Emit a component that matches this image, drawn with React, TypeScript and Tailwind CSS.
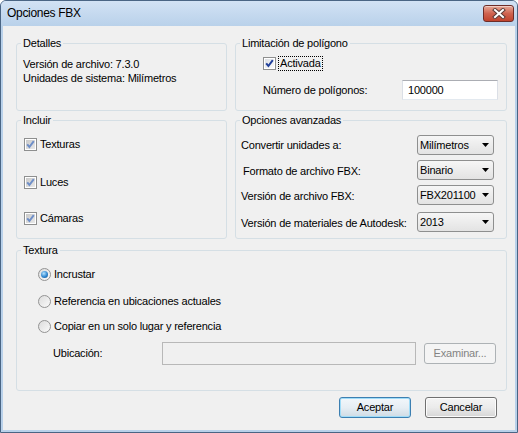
import type { ReactNode } from 'react';

// casilla estilo Windows 7
function Check({ dim = false }: { dim?: boolean }) {
    return (
        <span className="relative flex h-[13px] w-[13px] shrink-0 items-center justify-center border border-[#8e8f8f] bg-white">
            <span className={dim ? "h-[9px] w-[9px] bg-gradient-to-br from-[#c9c9c9] to-[#e9e9e9]" : "h-[9px] w-[9px] bg-gradient-to-br from-[#dcdfe4] to-[#fbfbfb]"} />
            <svg className="absolute left-0 top-0" width="11" height="11" viewBox="0 0 11 11">
                <path d="M2.2 5.4 L4.4 8 L8.8 2.2" fill="none" stroke={dim ? "#6f8fc8" : "#21409a"} strokeWidth="2" />
            </svg>
        </span>
    );
}

function Radio({ on = false }: { on?: boolean }) {
    return (
        <span className="flex h-[13px] w-[13px] shrink-0 items-center justify-center rounded-full border border-[#939393] bg-gradient-to-br from-[#dcdcdc] to-[#fafafa]">
            {on && (
                <span className="h-[7px] w-[7px] rounded-full bg-[radial-gradient(circle_at_40%_35%,#b6e4ff,#2f86d0_55%,#154f86)]" />
            )}
        </span>
    );
}

function Group({ title, className, children }: { title: string; className: string; children: ReactNode }) {
    return (
        <div className={`flex flex-col rounded-[3px] border border-[#d5dfe5] ${className}`}>
            <span className="-mt-[7px] ml-[4px] w-fit bg-[#f0f0f0] px-[2px] leading-[13px]">{title}</span>
            {children}
        </div>
    );
}

function Combo({ value }: { value: string }) {
    return (
        <div className="flex h-[20px] w-[77px] items-center justify-between rounded-[3px] border border-[#8e8f8f] bg-gradient-to-b from-[#f6f6f6] to-[#e3e3e3] pl-[2px] pr-[4px]">
            <span className="leading-[13px]">{value}</span>
            <svg width="7" height="4" viewBox="0 0 7 4">
                <path d="M0 0 H7 L3.5 4 Z" fill="#000" />
            </svg>
        </div>
    );
}

function Button({ label, main = false, off = false }: { label: string; main?: boolean; off?: boolean }) {
    let cls = "flex h-[21px] w-[72px] items-center justify-center rounded-[3px] border border-[#707070] bg-gradient-to-b from-[#f4f4f4] via-[#ebebeb] to-[#d6d6d6] shadow-[inset_0_0_0_1px_#fcfcfc]";
    if (main) cls = "flex h-[21px] w-[72px] items-center justify-center rounded-[3px] border border-[#3c7fb1] bg-gradient-to-b from-[#f2f7fb] via-[#e6eef4] to-[#cfdbe4] shadow-[inset_0_0_0_1px_#9fdcf8]";
    if (off) cls = "flex h-[21px] w-[72px] items-center justify-center rounded-[3px] border border-[#adb2b5] bg-[#f4f4f4] text-[#838383]";
    return <div className={cls}>{label}</div>;
}

export default function App() {
    return (
        <div className="flex h-[433px] w-[518px] flex-col rounded-t-[6px] border border-[#4a6584] bg-[#b9d1ea] font-['Liberation_Sans',Arial,sans-serif] text-[11px] tracking-[-0.2px] text-black">
            {/* barra de título */}
            <div className="flex h-[25px] shrink-0 items-start justify-between rounded-t-[5px] bg-gradient-to-b from-[#d2e2f4] to-[#b9d1ea] pl-[6px] pr-[3px]">
                <span className="mt-[5px] text-[12px] leading-[15px] tracking-[-0.3px]">Opciones FBX</span>
                <div className="mt-[4px] flex h-[17px] w-[31px] items-center justify-center rounded-[3px] border border-[#6d2c28] bg-gradient-to-b from-[#e6a898] via-[#cf6350] to-[#c0422c] shadow-[inset_0_1px_0_rgba(255,255,255,0.45)]">
                    <svg width="14" height="11" viewBox="0 0 14 11">
                        <path d="M3 2 L11 9 M11 2 L3 9" stroke="#5b3b37" strokeWidth="4" strokeLinecap="square" />
                        <path d="M3 2 L11 9 M11 2 L3 9" stroke="#ffffff" strokeWidth="2" strokeLinecap="square" />
                    </svg>
                </div>
            </div>

            {/* área de cliente */}
            <div className="mx-[2px] mb-[2px] flex flex-1 flex-col bg-[#f0f0f0] pl-[13px] pr-[8px] pt-[17px]">
                <div className="flex h-[68px] gap-[8px]">
                    <Group title="Detalles" className="w-[211px]">
                        <div className="mt-[7px] pl-[6px] leading-[14px]">
                            <p>Versión de archivo: 7.3.0</p>
                            <p>Unidades de sistema: Milímetros</p>
                        </div>
                    </Group>
                    <Group title="Limitación de polígono" className="w-[272px]">
                        <div className="mt-[6px] flex items-center pl-[27px]">
                            <Check />
                            <span className="ml-[2px] border border-dotted border-black px-[1px] leading-[13px]">Activada</span>
                        </div>
                        <div className="mt-[9px] flex h-[20px] items-center justify-between pl-[27px] pr-[8px]">
                            <span>Número de polígonos:</span>
                            <div className="flex h-[20px] w-[96px] items-center border border-[#abadb3] border-b-[#e3e9ef] border-x-[#dbdfe6] bg-white pl-[5px]">100000</div>
                        </div>
                    </Group>
                </div>

                <div className="mt-[9px] flex h-[119px] gap-[8px]">
                    <Group title="Incluir" className="w-[211px]">
                        <div className="flex flex-col pl-[7px]">
                            <label className="mt-[11px] flex h-[13px] items-center gap-[3px]"><Check dim />Texturas</label>
                            <label className="mt-[25px] flex h-[13px] items-center gap-[3px]"><Check dim />Luces</label>
                            <label className="mt-[23px] flex h-[13px] items-center gap-[3px]"><Check dim />Cámaras</label>
                        </div>
                    </Group>
                    <Group title="Opciones avanzadas" className="w-[272px]">
                        <div className="flex flex-col pl-[5px] pr-[12px]">
                            <div className="mt-[8px] flex h-[20px] items-center justify-between">
                                <span>Convertir unidades a:</span>
                                <Combo value="Milímetros" />
                            </div>
                            <div className="mt-[5px] flex h-[20px] items-center justify-between">
                                <span className="ml-[2px] mt-[2px]">Formato de archivo FBX:</span>
                                <Combo value="Binario" />
                            </div>
                            <div className="mt-[5px] flex h-[20px] items-center justify-between">
                                <span className="mt-[2px]">Versión de archivo FBX:</span>
                                <Combo value="FBX201100" />
                            </div>
                            <div className="mt-[7px] flex h-[20px] items-center justify-between">
                                <span className="mt-[2px]">Versión de materiales de Autodesk:</span>
                                <Combo value="2013" />
                            </div>
                        </div>
                    </Group>
                </div>

                <Group title="Textura" className="mt-[11px] h-[141px] w-[491px]">
                    <div className="flex flex-col pl-[21px]">
                        <label className="mt-[11px] flex h-[13px] items-center gap-[3px]"><Radio on />Incrustar</label>
                        <label className="mt-[14px] flex h-[13px] items-center gap-[3px]"><Radio />Referencia en ubicaciones actuales</label>
                        <label className="mt-[12px] flex h-[13px] items-center gap-[3px]"><Radio />Copiar en un solo lugar y referencia</label>
                        <div className="mt-[9px] flex h-[23px] items-center">
                            <span className="ml-[15px] w-[109px]">Ubicación:</span>
                            <div className="h-[23px] w-[254px] border border-[#b8b8b8] bg-[#f0f0f0]" />
                            <div className="ml-[8px]"><Button label="Examinar..." off /></div>
                        </div>
                    </div>
                </Group>

                <div className="mt-[6px] flex justify-end gap-[14px] pr-[10px]">
                    <Button label="Aceptar" main />
                    <Button label="Cancelar" />
                </div>
            </div>
        </div>
    );
}
